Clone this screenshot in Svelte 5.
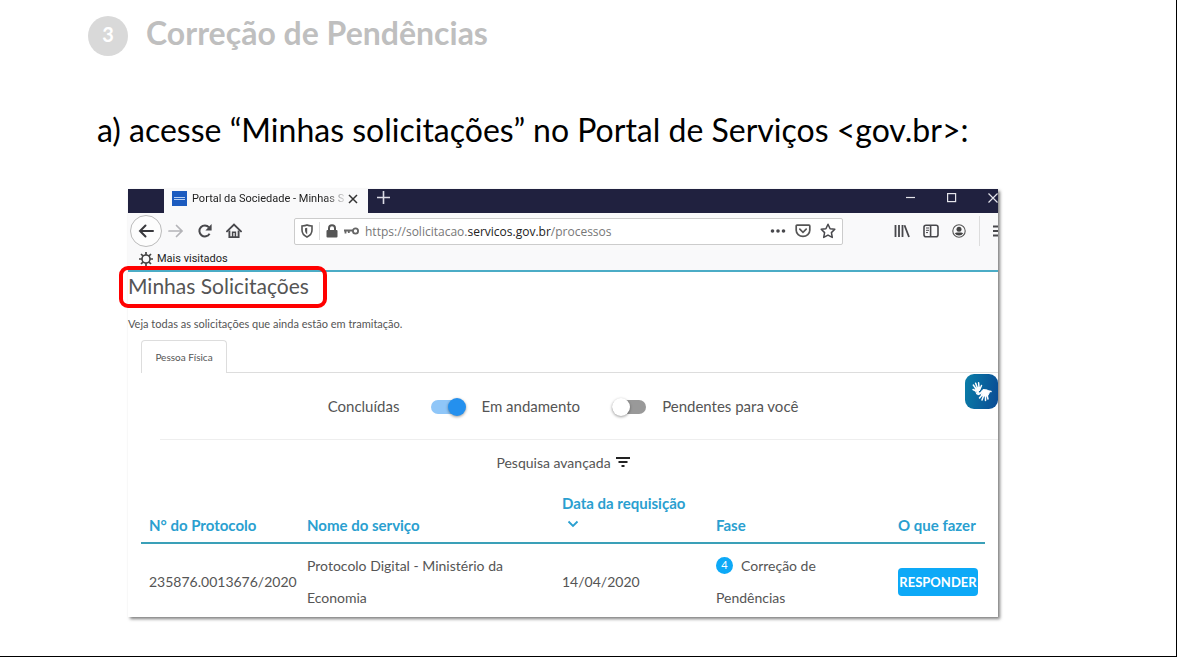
<script>
  let address = {
    start: "https://solicitacao.",
    domain: "servicos.gov.br",
    path: "/processos",
  };

  let showInProgress = true;
  let showPending = false;

  const requests = [
    {
      protocol: "235876.0013676/2020",
      service: "Protocolo Digital - Ministério da Economia",
      date: "14/04/2020",
      step: 4,
      phase: "Correção de Pendências",
    },
  ];
</script>

<main class="slide">
  <header class="slide-header">
    <span class="step">3</span>
    <h1>Correção de Pendências</h1>
  </header>
  <p class="instruction">
    a) acesse “Minhas solicitações” no Portal de Serviços &lt;gov.br&gt;:
  </p>

  <section class="browser">
    <div class="title-bar">
      <div class="browser-tab">
        <span class="favicon"><i></i><i></i></span>
        <span class="tab-title">Portal da Sociedade - Minhas S</span>
        <button class="icon-button" aria-label="Fechar aba">
          <svg width="10" height="10" viewBox="0 0 10 10">
            <path d="M1 1l8 8M9 1L1 9" stroke="#333" stroke-width="1.5" />
          </svg>
        </button>
      </div>
      <button class="icon-button new-tab" aria-label="Nova aba">
        <svg width="13" height="13" viewBox="0 0 13 13">
          <path d="M6.5 0v13M0 6.5h13" stroke="#dcdce6" stroke-width="1.6" />
        </svg>
      </button>
      <div class="window-buttons">
        <button class="icon-button" aria-label="Minimizar">
          <svg width="10" height="10" viewBox="0 0 10 10">
            <path d="M0 4.5h9" stroke="#e4e4ea" stroke-width="1.2" />
          </svg>
        </button>
        <button class="icon-button" aria-label="Maximizar">
          <svg width="10" height="10" viewBox="0 0 10 10">
            <rect x=".6" y=".6" width="8" height="8" fill="none" stroke="#e4e4ea" stroke-width="1.2" />
          </svg>
        </button>
        <button class="icon-button" aria-label="Fechar">
          <svg width="10" height="10" viewBox="0 0 10 10">
            <path d="M.5.5l9 9M9.5.5l-9 9" stroke="#e4e4ea" stroke-width="1.2" />
          </svg>
        </button>
      </div>
    </div>

    <div class="toolbar">
      <button class="icon-button back" aria-label="Voltar">
        <svg width="16" height="14" viewBox="0 0 16 14" fill="none" stroke="#38383d" stroke-width="2">
          <path d="M15 7H2M7.5 1.5L2 7l5.5 5.5" stroke-linecap="round" />
        </svg>
      </button>
      <button class="icon-button" aria-label="Avançar">
        <svg width="16" height="14" viewBox="0 0 16 14" fill="none" stroke="#b4b4b8" stroke-width="1.7">
          <path d="M1 7h13M8.5 1.5L14 7l-5.5 5.5" stroke-linecap="round" />
        </svg>
      </button>
      <button class="icon-button" aria-label="Recarregar">
        <svg width="16" height="16" viewBox="0 0 16 16">
          <path d="M12.6 10.8A5.5 5.5 0 1 1 12 4.3" fill="none" stroke="#48484c" stroke-width="2" />
          <path d="M14.6 1v6.4H8.4z" fill="#48484c" />
        </svg>
      </button>
      <button class="icon-button" aria-label="Página inicial">
        <svg width="16" height="16" viewBox="0 0 16 16" fill="none" stroke="#48484c" stroke-width="1.9">
          <path d="M1 8.4L8 1.6l7 6.8" stroke-linecap="round" />
          <path d="M3.4 7.5v6.6h9.2V7.5" />
          <path d="M6.6 14V9.2h2.8V14" stroke-width="1.5" />
        </svg>
      </button>

      <div class="address-bar">
        <svg width="12" height="14" viewBox="0 0 12 14">
          <path d="M6 1c1.6.8 3.2.9 5 1v4c0 3.5-2 5.6-5 7-3-1.4-5-3.5-5-7V2c1.8-.1 3.4-.2 5-1z" fill="none" stroke="#555" stroke-width="1.6" />
          <path d="M6.2 3.7v6.5c-1.4-1-2.2-2.3-2.2-4.2V4.2z" fill="#555" />
        </svg>
        <span class="separator"></span>
        <svg width="12" height="14" viewBox="0 0 12 14">
          <path d="M3 7V4.3a3 3 0 0 1 6 0V7" fill="none" stroke="#555" stroke-width="2" />
          <rect x=".5" y="6" width="11" height="7.5" rx="1" fill="#555" />
        </svg>
        <svg width="15" height="10" viewBox="0 0 15 10" fill="none" stroke="#666">
          <circle cx="11.5" cy="5" r="2.6" stroke-width="1.8" />
          <path d="M9 4.5H0M1.5 4.5v3M4.8 4.5v2.5" stroke-width="1.8" />
        </svg>
        <a class="url" href="#processos">{address.start}<b>{address.domain}</b>{address.path}</a>
        <button class="icon-button" aria-label="Ações da página">
          <svg width="16" height="16" viewBox="0 0 16 16" fill="#48484c">
            <circle cx="2.5" cy="8" r="1.8" /><circle cx="8" cy="8" r="1.8" /><circle cx="13.5" cy="8" r="1.8" />
          </svg>
        </button>
        <button class="icon-button" aria-label="Salvar no Pocket">
          <svg width="16" height="16" viewBox="0 0 16 16" fill="none" stroke="#555" stroke-width="1.7">
            <path d="M2 2.2h12a.8.8 0 0 1 .8.8v4.2a6.8 6.2 0 0 1-13.6 0V3a.8.8 0 0 1 .8-.8z" />
            <path d="M4.8 6.2L8 9.3l3.2-3.1" stroke-linecap="round" />
          </svg>
        </button>
        <button class="icon-button" aria-label="Adicionar aos favoritos">
          <svg width="16" height="16" viewBox="0 0 16 16">
            <path d="M8 1.3l2.1 4.4 4.7.6-3.4 3.3.9 4.8L8 12.1l-4.3 2.3.9-4.8L1.2 6.3l4.7-.6z" fill="none" stroke="#48484c" stroke-width="1.5" stroke-linejoin="round" />
          </svg>
        </button>
      </div>

      <div class="toolbar-end">
        <button class="icon-button" aria-label="Biblioteca">
          <svg width="16" height="14" viewBox="0 0 16 14" fill="none" stroke="#48484c" stroke-width="1.8">
            <path d="M1.5 1v12M5 1v12M8.5 1v12M10.5 1.3L15 13" />
          </svg>
        </button>
        <button class="icon-button" aria-label="Barra lateral">
          <svg width="16" height="14" viewBox="0 0 16 14" fill="none" stroke="#48484c" stroke-width="1.6">
            <rect x="1" y="1.2" width="14" height="11.6" rx="2" />
            <path d="M7.6 1v12" /><path d="M3 4h3M3 6.3h3M3 8.6h2" stroke-width="1" />
          </svg>
        </button>
        <button class="icon-button" aria-label="Conta">
          <svg width="14" height="14" viewBox="0 0 14 14">
            <circle cx="7" cy="7" r="6.2" fill="none" stroke="#555" stroke-width="1.1" />
            <circle cx="7" cy="5.2" r="2.5" fill="#444" />
            <path d="M2.8 9.2C4 8 5.5 8.5 7 8.5s3-.5 4.2.7A5 5 0 0 1 7 11.6a5 5 0 0 1-4.2-2.4z" fill="#444" />
          </svg>
        </button>
        <span class="separator tall"></span>
        <button class="icon-button" aria-label="Menu">
          <svg width="14" height="14" viewBox="0 0 14 14">
            <path d="M0 2.5h12M0 7h12M0 11.5h12" stroke="#48484c" stroke-width="1.8" />
          </svg>
        </button>
      </div>
    </div>

    <div class="bookmarks">
      <svg width="14" height="14" viewBox="0 0 14 14" fill="none" stroke="#444">
        <circle cx="7" cy="7" r="4" stroke-width="1.6" />
        <path d="M7 0v3M7 11v3M0 7h3M11 7h3M2 2l2.2 2.2M9.8 9.8L12 12M12 2L9.8 4.2M4.2 9.8L2 12" stroke-width="1.7" />
      </svg>
      <a href="#visitados">Mais visitados</a>
    </div>

    <div class="page">
      <h2><span class="highlight"></span>Minhas Solicitações</h2>
      <p class="subtitle">Veja todas as solicitações que ainda estão em tramitação.</p>

      <div class="tabs">
        <button class="tab">Pessoa Física</button>
      </div>

      <div class="filters">
        <span>Concluídas</span>
        <label>
          <input type="checkbox" class="toggle" bind:checked={showInProgress} />
          Em andamento
        </label>
        <label>
          <input type="checkbox" class="toggle" bind:checked={showPending} />
          Pendentes para você
        </label>
      </div>

      <button class="advanced">
        Pesquisa avançada
        <svg width="14" height="10" viewBox="0 0 14 10">
          <path d="M0 1h14M2.5 5h9M5.5 9h3" stroke="#222" stroke-width="1.9" />
        </svg>
      </button>

      <table>
        <thead>
          <tr>
            <th class="col-protocol">N° do Protocolo</th>
            <th class="col-service">Nome do serviço</th>
            <th class="col-date">
              Data da requisição
              <svg width="12" height="8" viewBox="0 0 12 8">
                <path d="M1.5 1.5L6 6l4.5-4.5" fill="none" stroke="#2a9fd0" stroke-width="1.8" />
              </svg>
            </th>
            <th class="col-phase">Fase</th>
            <th>O que fazer</th>
          </tr>
        </thead>
        <tbody>
          {#each requests as request}
            <tr>
              <td>{request.protocol}</td>
              <td>{request.service}</td>
              <td>{request.date}</td>
              <td class="phase"><span class="phase-number">{request.step}</span>{request.phase}</td>
              <td><button class="answer">RESPONDER</button></td>
            </tr>
          {/each}
        </tbody>
      </table>
    </div>

    <button class="libras" aria-label="Conteúdo em Libras">
      <svg width="22" height="22" viewBox="0 0 22 22" fill="none" stroke="#fff" stroke-linecap="round">
        <path d="M4.8 7.5L2.3 4M6.2 6.5L4.6 2.2M8 6.5L7.6 1.8M5 10L2 8.5M9 8l1.5-3.5" stroke-width="1.5" />
        <path d="M4.5 7.5L8.5 6l.5 3-1.5 1.5 1 2-2.5.5z" fill="#fff" stroke-width="1" />
        <path d="M9.5 11.5L12 8.500l4.500.5 2 2.500-2 3.500h-4.500z" fill="#fff" stroke-width="1" />
        <path d="M17.500 10l2.500.5M11 14l-2.500 3M12.500 15l-1.500 4M14.500 15v4.500M16.200 14.500l.8 3.500M9.500 12.500l-2.500 1" stroke-width="1.5" />
      </svg>
    </button>
  </section>
</main>

<style>
  :global(body) {
    margin: 0;
    background: #fff;
  }

  .slide {
    box-sizing: border-box;
    min-height: 100vh;
    padding: 16px 178px 38px 88px;
    border-right: 1px solid #000;
    border-bottom: 1px solid #000;
    font-family: Lato, sans-serif;
  }

  button {
    font-family: inherit;
    cursor: pointer;
  }

  a {
    color: inherit;
    text-decoration: none;
  }

  .slide-header {
    display: flex;
    align-items: center;
    gap: 18px;
  }

  .step {
    width: 40px;
    height: 40px;
    border-radius: 50%;
    background: #d9d9d9;
    color: #fff;
    font-size: 20px;
    font-weight: 700;
    line-height: 36px;
    text-align: center;
  }

  h1 {
    margin: 0;
    padding-bottom: 6px;
    color: #bfbfbf;
    font-size: 32px;
    font-weight: 700;
    line-height: 34px;
  }

  .instruction {
    margin: 52px 0 0 9px;
    font-size: 32px;
    line-height: 44px;
  }

  .browser {
    position: relative;
    margin: 37px 0 0 40px;
    background: #fff;
    box-shadow: 2px 2px 3px rgba(0, 0, 0, 0.5);
  }

  .icon-button {
    display: flex;
    flex: none;
    padding: 0;
    border: 0;
    background: none;
  }

  .title-bar {
    display: flex;
    height: 24px;
    padding-left: 36px;
    overflow: hidden;
    background: #20213f;
  }

  .browser-tab {
    display: flex;
    align-items: center;
    box-sizing: border-box;
    width: 204px;
    padding: 0 10px 5px 8px;
    background: #f9f9fa;
  }

  .favicon {
    display: flex;
    flex: none;
    flex-direction: column;
    justify-content: center;
    gap: 1px;
    width: 15px;
    height: 15px;
    background: #1c5bbf;
  }

  .favicon i {
    height: 1px;
    margin: 0 2px;
    background: #b8d0f2;
  }

  .tab-title {
    flex: 1;
    margin-left: 5px;
    color: #222;
    font-family: Roboto, sans-serif;
    font-size: 11px;
    line-height: 16px;
    white-space: nowrap;
    mask-image: linear-gradient(to right, #000 85%, transparent);
  }

  .new-tab {
    padding: 2px 9px;
  }

  .window-buttons {
    display: flex;
    gap: 31px;
    margin: 4px 0 0 auto;
  }

  .toolbar {
    display: flex;
    align-items: center;
    height: 36px;
    gap: 13px;
    padding-left: 2px;
    overflow: hidden;
    background: #f9f9fa;
  }

  .back {
    align-items: center;
    justify-content: center;
    box-sizing: border-box;
    width: 32px;
    height: 32px;
    margin-right: -7px;
    border: 1px solid #bbb;
    border-radius: 50%;
    background: #fdfdfd;
  }

  .address-bar {
    display: flex;
    flex: 1;
    align-items: center;
    box-sizing: border-box;
    height: 27px;
    margin-left: 39px;
    gap: 6px;
    padding: 0 6px;
    border: 1px solid #ccc;
    border-radius: 2px;
    background: #fff;
  }

  .address-bar svg {
    flex: none;
  }

  .address-bar button {
    margin-left: 3px;
  }

  .separator {
    width: 1px;
    height: 18px;
    background: #ddd;
  }

  .tall {
    height: 30px;
  }

  .url {
    flex: 1;
    overflow: hidden;
    color: #777;
    font-family: "Open Sans", sans-serif;
    font-size: 12px;
    white-space: nowrap;
  }

  .url b {
    color: #222;
    font-weight: 400;
  }

  .toolbar-end {
    display: flex;
    align-items: center;
    gap: 13px;
    margin: 0 -9px 0 38px;
  }

  .bookmarks {
    display: flex;
    align-items: center;
    box-sizing: border-box;
    height: 21px;
    gap: 4px;
    padding: 0 0 2px 11px;
    background: #f9f9fa;
    color: #222;
    font-family: Roboto, sans-serif;
    font-size: 11px;
  }

  .page {
    padding-bottom: 3px;
    border-top: 2px solid #4bacc6;
    color: #555;
    font-size: 14px;
  }

  h2 {
    position: relative;
    width: fit-content;
    margin: 0;
    color: #555;
    font-size: 21px;
    font-weight: 400;
    line-height: 28px;
  }

  /* red frame around the page title */
  .highlight {
    position: absolute;
    inset: -6px -18px -8px -9px;
    border: 4px solid #f00;
    border-radius: 9px;
  }

  .subtitle {
    margin: 16px 0 0;
    font-size: 11px;
    line-height: 16px;
  }

  .tabs {
    display: flex;
    height: 32px;
    margin: 8px 0 0 13px;
    border-bottom: 1px solid #ddd;
  }

  .tab {
    box-sizing: border-box;
    width: 86px;
    height: 33px;
    padding: 0;
    border: 1px solid #ddd;
    border-bottom: 0;
    border-radius: 4px 4px 0 0;
    background: #fff;
    color: #555;
    font-size: 10px;
    white-space: nowrap;
  }

  .filters {
    display: flex;
    align-items: center;
    justify-content: center;
    box-sizing: border-box;
    height: 67px;
    gap: 32px;
    margin-left: 32px;
    padding-right: 32px;
    border-bottom: 1px solid #eee;
    font-size: 15px;
  }

  .filters label {
    display: flex;
    align-items: center;
    gap: 16px;
  }

  .toggle {
    position: relative;
    width: 34px;
    height: 14px;
    margin: 2px 0 0;
    border-radius: 7px;
    background: #999;
    appearance: none;
    cursor: pointer;
  }

  .toggle::before {
    content: "";
    position: absolute;
    top: -2px;
    left: 0;
    width: 18px;
    height: 18px;
    border-radius: 50%;
    background: #fff;
    box-shadow: 0 1px 3px rgba(0, 0, 0, 0.4);
  }

  .toggle:checked {
    background: #8fc6f8;
  }

  .toggle:checked::before {
    left: 17px;
    background: #2490ee;
  }

  .advanced {
    display: flex;
    align-items: center;
    height: 20px;
    gap: 5px;
    margin: 12px auto 20px;
    padding: 0;
    border: 0;
    background: none;
    color: #555;
    font-size: 14px;
  }

  table {
    width: calc(100% - 26px);
    margin: 0 13px;
    border-collapse: collapse;
    table-layout: fixed;
  }

  th,
  td {
    box-sizing: border-box;
    padding: 6px 0 0 8px;
    text-align: left;
  }

  th {
    padding: 0 0 6px 8px;
    border-bottom: 2px solid #3aa0b8;
    color: #2a9fd0;
    font-size: 15px;
    line-height: 22px;
    vertical-align: bottom;
  }

  th svg {
    display: block;
    margin: 6px 5px 8px;
  }

  td {
    line-height: 32px;
  }

  td:nth-child(2) {
    padding-right: 32px;
  }

  .phase {
    padding-right: 48px;
  }

  .col-protocol {
    width: 158px;
  }

  .col-service {
    width: 255px;
  }

  .col-date {
    width: 154px;
  }

  .col-phase {
    width: 182px;
  }

  .phase-number {
    display: inline-block;
    width: 17px;
    height: 17px;
    margin-right: 8px;
    border-radius: 50%;
    background: #0da9f7;
    color: #fff;
    font-size: 11px;
    line-height: 15px;
    text-align: center;
    vertical-align: 2px;
  }

  .answer {
    display: block;
    width: 80px;
    height: 28px;
    padding: 0;
    border: 0;
    border-radius: 4px;
    background: #0da9f7;
    color: #fff;
    font-size: 13px;
    font-weight: 700;
  }

  .libras {
    position: absolute;
    top: 185px;
    right: 0;
    display: flex;
    align-items: center;
    justify-content: center;
    width: 33px;
    height: 35px;
    padding: 0;
    border: 0;
    border-radius: 9px;
    background: linear-gradient(100deg, #0a7ea8, #0a4a94);
  }
</style>
